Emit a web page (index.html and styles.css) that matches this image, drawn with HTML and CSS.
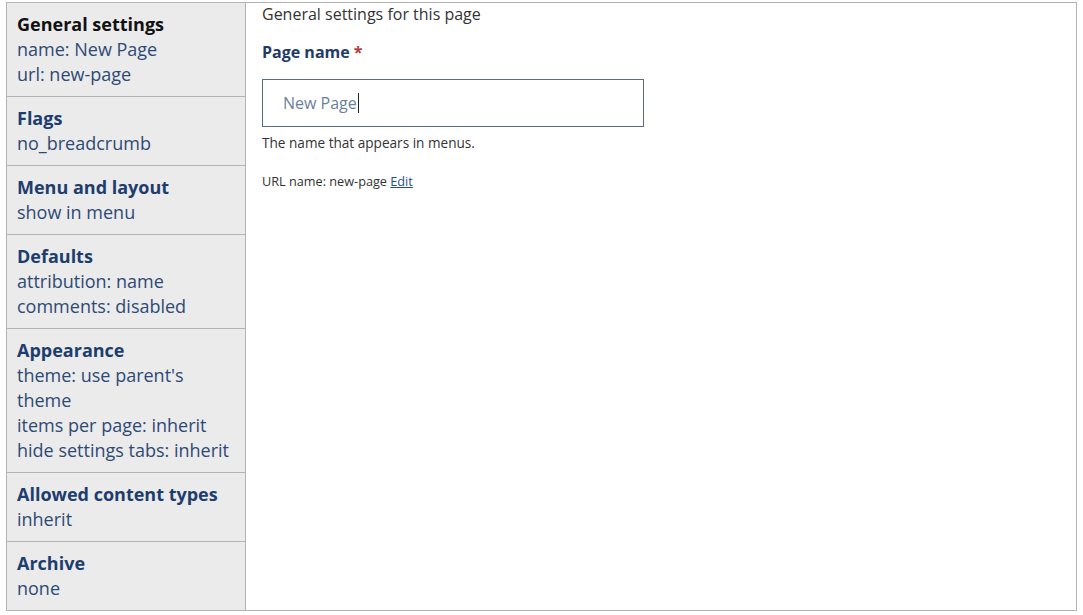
FILE: index.html
```html
<!DOCTYPE html>
<html>
<head>
<meta charset="utf-8">
<link rel="stylesheet" href="styles.css">
</head>
<body>
<div class="frame">
  <nav class="sidebar">
    <div class="item active">
      <div class="title">General settings</div>
      <div class="sub">name: New Page</div>
      <div class="sub">url: new-page</div>
    </div>
    <div class="item">
      <div class="title">Flags</div>
      <div class="sub">no_breadcrumb</div>
    </div>
    <div class="item">
      <div class="title">Menu and layout</div>
      <div class="sub">show in menu</div>
    </div>
    <div class="item">
      <div class="title">Defaults</div>
      <div class="sub">attribution: name</div>
      <div class="sub">comments: disabled</div>
    </div>
    <div class="item">
      <div class="title">Appearance</div>
      <div class="sub">theme: use parent's theme</div>
      <div class="sub">items per page: inherit</div>
      <div class="sub">hide settings tabs: inherit</div>
    </div>
    <div class="item">
      <div class="title">Allowed content types</div>
      <div class="sub">inherit</div>
    </div>
    <div class="item last">
      <div class="title">Archive</div>
      <div class="sub">none</div>
    </div>
  </nav>
  <main class="content">
    <div class="intro">General settings for this page</div>
    <label class="label">Page name <span class="req">*</span></label>
    <div class="input"><span class="value">New Page</span><span class="caret"></span></div>
    <div class="help">The name that appears in menus.</div>
    <div class="url">URL name: new-page <a href="#" class="edit">Edit</a></div>
  </main>
</div>
</body>
</html>
```
FILE: styles.css
```css
html, body {
  margin: 0;
  padding: 0;
  background: #ffffff;
}
body {
  font-family: "Open Sans", "DejaVu Sans", sans-serif;
}
.frame {
  margin: 2px 0 0 6px;
  width: 1069px;
  height: 607px;
  border: 1px solid #b3b3b3;
  display: flex;
}
.sidebar {
  width: 238px;
  flex: none;
  background: #ebebeb;
  border-right: 1px solid #b3b3b3;
  display: flex;
  flex-direction: column;
}
.item {
  padding: 9px 10px 9px 10px;
  border-bottom: 1px solid #b3b3b3;
  font-size: 18px;
  line-height: 25px;
  color: #2b4670;
}
.item.last {
  border-bottom: none;
}
.title {
  font-weight: 700;
  color: #1d3d6d;
}
.item.active .title {
  color: #111111;
}
.sub {
  color: #2e4a74;
}
.content {
  flex: 1;
  padding: 0 16px 0 16px;
}
.intro {
  font-size: 16px;
  line-height: 22px;
  color: #333333;
}
.label {
  display: block;
  margin-top: 16px;
  font-size: 16px;
  line-height: 22px;
  font-weight: 700;
  color: #1f3b66;
}
.req {
  color: #b03a3a;
  font-weight: 700;
}
.input {
  margin-top: 16px;
  height: 46px;
  border: 1px solid #5a6b80;
  display: flex;
  align-items: center;
  padding-left: 20px;
  box-sizing: content-box;
  width: 360px;
  font-size: 16px;
  color: #6b7f9c;
}
.caret {
  display: inline-block;
  width: 1px;
  height: 20px;
  background: #222;
  margin-left: 1px;
}
.help {
  margin-top: 7px;
  font-size: 13.6px;
  line-height: 18px;
  color: #333333;
}
.url {
  margin-top: 21px;
  font-size: 12.7px;
  line-height: 16px;
  color: #333333;
}
.edit {
  color: #1f4f8a;
  text-decoration: underline;
}
```
